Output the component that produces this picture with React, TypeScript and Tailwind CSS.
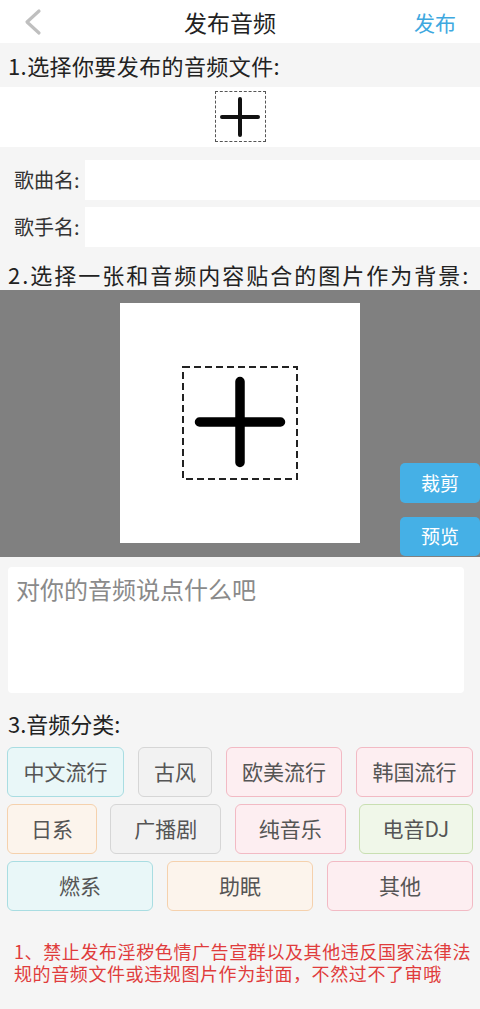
import React from "react";

// styles des tags de categorie
type Tone = "cyan" | "gray" | "pink" | "orange" | "green";

const toneClass: Record<Tone, string> = {
  cyan: "bg-[#e9f7f8] border-[#a9dde2]",
  gray: "bg-[#f2f2f2] border-[#d6d6d6]",
  pink: "bg-[#fdeef1] border-[#f2bac4]",
  orange: "bg-[#fcf4ec] border-[#f5d1ad]",
  green: "bg-[#f0f7e9] border-[#c9dfb2]",
};

interface Tag {
  label: string;
  tone: Tone;
  width: string;
}

const rows: Tag[][] = [
  [
    { label: "中文流行", tone: "cyan", width: "w-[117px]" },
    { label: "古风", tone: "gray", width: "w-[74px]" },
    { label: "欧美流行", tone: "pink", width: "w-[116px]" },
    { label: "韩国流行", tone: "pink", width: "w-[117px]" },
  ],
  [
    { label: "日系", tone: "orange", width: "w-[90px]" },
    { label: "广播剧", tone: "gray", width: "w-[111px]" },
    { label: "纯音乐", tone: "pink", width: "w-[111px]" },
    { label: "电音DJ", tone: "green", width: "w-[114px]" },
  ],
  [
    { label: "燃系", tone: "cyan", width: "w-[146px]" },
    { label: "助眠", tone: "orange", width: "w-[146px]" },
    { label: "其他", tone: "pink", width: "w-[146px]" },
  ],
];

function CategoryTag({ tag }: { tag: Tag }) {
  return (
    <div
      className={`flex h-[50px] items-center justify-center rounded-[6px] border text-[21px] text-[#555] ${toneClass[tag.tone]} ${tag.width}`}
    >
      {tag.label}
    </div>
  );
}

function InputRow({ label }: { label: string }) {
  return (
    <div className="flex items-center">
      <span className="w-[85px] pl-[14px] text-[20px] text-[#333]">{label}</span>
      <div className="h-[40px] flex-1 bg-white" />
    </div>
  );
}

export default function App() {
  return (
    <div
      className="min-h-[1009px] w-[480px] bg-[#f5f5f5] text-[#222]"
      style={{ fontFamily: '"Noto Sans CJK SC", "Noto Sans", sans-serif' }}
    >
      {/* barre du haut */}
      <div className="flex h-[43px] items-center bg-white">
        <div className="flex w-[80px] items-center pl-[24px]">
          <svg width="18" height="28" viewBox="0 0 18 28">
            <path
              d="M15 3 L3 14 L15 25"
              fill="none"
              stroke="#bfbfbf"
              strokeWidth="3.2"
              strokeLinecap="round"
              strokeLinejoin="round"
            />
          </svg>
        </div>
        <div className="flex-1 text-center text-[23px] leading-[30px]">发布音频</div>
        <div className="w-[100px] pr-[24px] text-right text-[21px] leading-[30px] text-[#3ea8df]">
          发布
        </div>
      </div>

      {/* etape 1 */}
      <div className="flex h-[44px] items-center px-[8px] text-[22px] tracking-[0.4px]">
        1.选择你要发布的音频文件:
      </div>
      <div className="flex h-[60px] justify-center bg-white pt-[4px]">
        <div className="flex h-[51px] w-[51px] items-center justify-center border border-dashed border-[#555]">
          <svg width="40" height="40" viewBox="0 0 40 40">
            <path
              d="M20 2 V38 M2 20 H38"
              stroke="#111"
              strokeWidth="4"
              strokeLinecap="round"
            />
          </svg>
        </div>
      </div>

      <div className="flex flex-col gap-[7px] pt-[13px]">
        <InputRow label="歌曲名:" />
        <InputRow label="歌手名:" />
      </div>

      {/* etape 2 */}
      <div className="flex h-[43px] items-end whitespace-nowrap px-[8px] pb-[1px] text-[22px] leading-[30px] tracking-[2px]">
        2.选择一张和音频内容贴合的图片作为背景:
      </div>
      <div className="relative flex h-[267px] justify-center bg-[#808080] pt-[13px]">
        <div className="flex h-[240px] w-[240px] items-center justify-center bg-white">
          <svg width="116" height="114" viewBox="0 0 116 114">
            <rect
              x="1"
              y="1"
              width="114"
              height="112"
              fill="none"
              stroke="#222"
              strokeWidth="2"
              strokeDasharray="7 4"
            />
            <path
              d="M58 15.5 V96.5 M17.5 56 H98.5"
              stroke="#000"
              strokeWidth="9.5"
              strokeLinecap="round"
            />
          </svg>
        </div>
        <div className="absolute right-0 top-[173px] flex flex-col gap-[14px]">
          <div className="flex h-[40px] w-[80px] items-center justify-center rounded-[5px] bg-[#45b0e6] text-[19px] text-white">
            裁剪
          </div>
          <div className="flex h-[39px] w-[80px] items-center justify-center rounded-[5px] bg-[#45b0e6] text-[19px] text-white">
            预览
          </div>
        </div>
      </div>

      {/* description */}
      <div className="pl-[8px] pr-[16px] pt-[10px]">
        <textarea
          className="block h-[126px] w-full resize-none rounded-[4px] bg-white px-[8px] pt-[7px] text-[24px] leading-[30px] outline-none placeholder:text-[#8a8a8a]"
          style={{ fontFamily: '"Noto Sans CJK SC", "Noto Sans", sans-serif' }}
          placeholder="对你的音频说点什么吧"
        />
      </div>

      {/* etape 3 */}
      <div className="flex h-[54px] items-center px-[8px] pt-[6px] text-[22px] leading-[30px]">
        3.音频分类:
      </div>
      <div className="flex flex-col gap-[7px] px-[7px]">
        {rows.map((row, i) => (
          <div key={i} className="flex justify-between">
            {row.map((tag) => (
              <CategoryTag key={tag.label} tag={tag} />
            ))}
          </div>
        ))}
      </div>

      <div className="px-[14px] pt-[29px] text-[18px] leading-[22px] tracking-[0.6px] text-[#e03c3c]">
        <p className="whitespace-nowrap">1、禁止发布淫秽色情广告宣群以及其他违反国家法律法</p>
        <p className="whitespace-nowrap">规的音频文件或违规图片作为封面，不然过不了审哦</p>
      </div>
    </div>
  );
}
